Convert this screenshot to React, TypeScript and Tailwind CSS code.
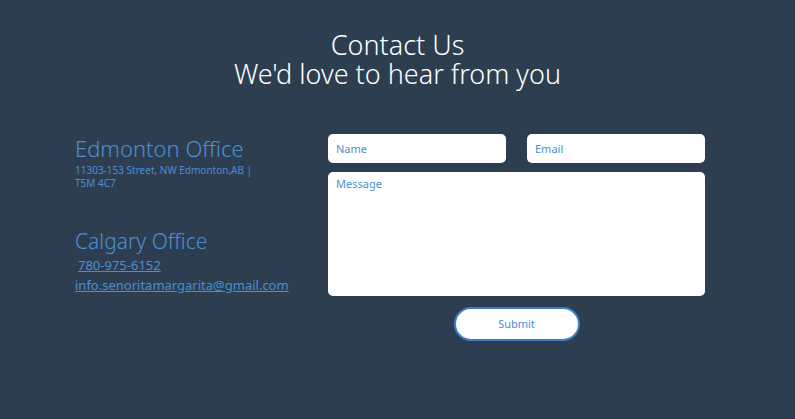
export default function App() {
  return (
    <div
      className="h-[419px] w-full bg-[#2d3e50] pt-[30px]"
      style={{ fontFamily: '"Noto Sans", sans-serif' }}
    >
      <div className="text-center text-[27px] leading-[29px] font-light text-white">
        <h1>Contact Us</h1>
        <p>We'd love to hear from you</p>
      </div>

      <div className="mt-[46px] flex pl-[75px]">
        <div className="w-[253px] text-[#4a8fd6]">
          <h2 className="text-[22px] leading-[28px] font-light">Edmonton Office</h2>
          <p className="mt-[2px] w-[190px] text-[10px] leading-[13px]">
            11303-153 Street, NW Edmonton,AB | T5M 4C7
          </p>
          <h2 className="mt-[37px] text-[21px] leading-[28px] font-light">Calgary Office</h2>
          <a href="#" className="ml-[3px] block text-[13px] leading-[20px] underline">
            780-975-6152
          </a>
          <a href="#" className="block text-[13px] leading-[21px] underline">
            info.senoritamargarita@gmail.com
          </a>
        </div>

        <form className="w-[377px]">
          <div className="flex gap-[21px]">
            <input
              placeholder="Name"
              className="h-[29px] w-[178px] rounded-[5px] bg-white px-[8px] text-[11px] placeholder:text-[#4a8fd6] outline-none"
            />
            <input
              placeholder="Email"
              className="h-[29px] w-[178px] rounded-[5px] bg-white px-[8px] text-[11px] placeholder:text-[#4a8fd6] outline-none"
            />
          </div>
          <textarea
            placeholder="Message"
            className="mt-[9px] block h-[124px] w-full resize-none rounded-[5px] bg-white px-[8px] py-[4px] text-[11px] placeholder:text-[#4a8fd6] outline-none"
          />
          <div className="mt-[11px] flex justify-center">
            <button
              type="button"
              className="h-[34px] w-[126px] rounded-full border-2 border-[#3f7fc4] bg-white text-[11px] text-[#4a8fd6]"
            >
              Submit
            </button>
          </div>
        </form>
      </div>
    </div>
  );
}
